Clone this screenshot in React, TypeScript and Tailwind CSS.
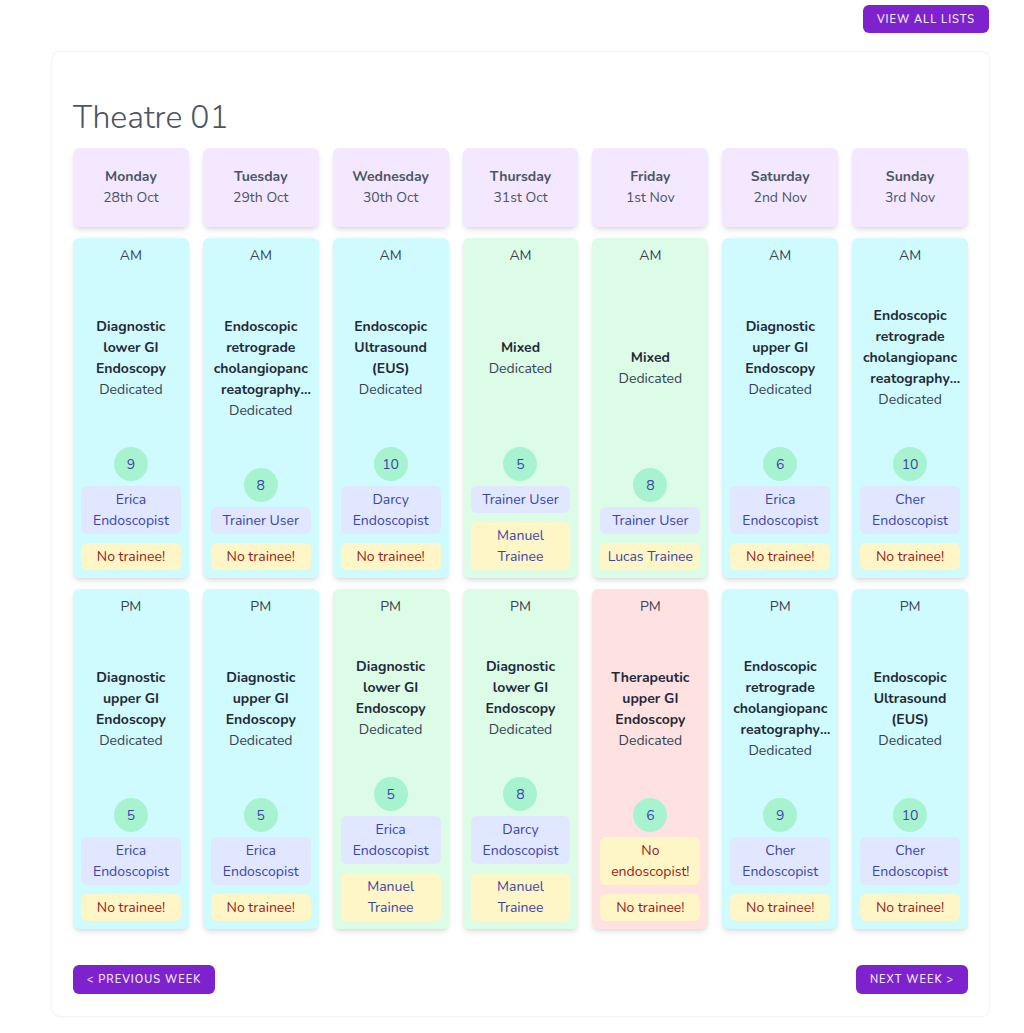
const days = [
  { name: "Monday", date: "28th Oct" },
  { name: "Tuesday", date: "29th Oct" },
  { name: "Wednesday", date: "30th Oct" },
  { name: "Thursday", date: "31st Oct" },
  { name: "Friday", date: "1st Nov" },
  { name: "Saturday", date: "2nd Nov" },
  { name: "Sunday", date: "3rd Nov" },
];

type Slot = {
  tone: "cyan" | "green" | "red";
  title: string;
  count: number;
  endoscopist: string | null;
  trainee: string | null;
};

const ERCP = "Endoscopic retrograde cholangiopancreatography (ERCP)";
const EUS = "Endoscopic Ultrasound (EUS)";
const DLGI = "Diagnostic lower GI Endoscopy";
const DUGI = "Diagnostic upper GI Endoscopy";

const am: Slot[] = [
  { tone: "cyan", title: DLGI, count: 9, endoscopist: "Erica Endoscopist", trainee: null },
  { tone: "cyan", title: ERCP, count: 8, endoscopist: "Trainer User", trainee: null },
  { tone: "cyan", title: EUS, count: 10, endoscopist: "Darcy Endoscopist", trainee: null },
  { tone: "green", title: "Mixed", count: 5, endoscopist: "Trainer User", trainee: "Manuel Trainee" },
  { tone: "green", title: "Mixed", count: 8, endoscopist: "Trainer User", trainee: "Lucas Trainee" },
  { tone: "cyan", title: DUGI, count: 6, endoscopist: "Erica Endoscopist", trainee: null },
  { tone: "cyan", title: ERCP, count: 10, endoscopist: "Cher Endoscopist", trainee: null },
];

const pm: Slot[] = [
  { tone: "cyan", title: DUGI, count: 5, endoscopist: "Erica Endoscopist", trainee: null },
  { tone: "cyan", title: DUGI, count: 5, endoscopist: "Erica Endoscopist", trainee: null },
  { tone: "green", title: DLGI, count: 5, endoscopist: "Erica Endoscopist", trainee: "Manuel Trainee" },
  { tone: "green", title: DLGI, count: 8, endoscopist: "Darcy Endoscopist", trainee: "Manuel Trainee" },
  { tone: "red", title: "Therapeutic upper GI Endoscopy", count: 6, endoscopist: null, trainee: null },
  { tone: "cyan", title: ERCP, count: 9, endoscopist: "Cher Endoscopist", trainee: null },
  { tone: "cyan", title: EUS, count: 10, endoscopist: "Cher Endoscopist", trainee: null },
];

const toneBg = {
  cyan: "bg-[#cffafe]",
  green: "bg-[#dcfce7]",
  red: "bg-[#fee2e2]",
};

function SlotCard({ slot, label }: { slot: Slot; label: string }) {
  return (
    <div className={`${toneBg[slot.tone]} h-[340px] rounded-md shadow-md flex flex-col items-center px-2 pt-[7px] pb-2 text-sm leading-[21px] text-center`}>
      <div className="text-[#374151]">{label}</div>
      <div className="flex-1 flex flex-col items-center justify-center w-full pt-0.5">
        <div className="font-bold text-[#1f2937] line-clamp-4 [overflow-wrap:anywhere] px-px">{slot.title}</div>
        <div className="text-[#374151]">Dedicated</div>
      </div>
      <div className="w-[34px] h-[34px] rounded-full bg-[#a7f3d0] text-[#3b45a8] flex items-center justify-center">
        {slot.count}
      </div>
      {slot.endoscopist ? (
        <div className="mt-[5px] w-full rounded-md bg-[#e0e7ff] text-[#3b45a8] py-[3px] px-1">{slot.endoscopist}</div>
      ) : (
        <div className="mt-[5px] w-full rounded-md bg-[#fef6c6] text-[#991b1b] py-[3px] px-1">No endoscopist!</div>
      )}
      {slot.trainee ? (
        <div className="mt-[9px] w-full rounded-md bg-[#fef6c6] text-[#3b45a8] py-[3px] px-1">{slot.trainee}</div>
      ) : (
        <div className="mt-[9px] w-full rounded-md bg-[#fef6c6] text-[#991b1b] py-[3px] px-1">No trainee!</div>
      )}
    </div>
  );
}

export default function App() {
  return (
    <div className="min-h-screen bg-white font-['Nunito','Lato','Open_Sans',sans-serif]">
      <div className="ml-[52px] w-[937px] pt-[5px] pb-4">
        <div className="flex justify-end">
          <button className="h-[28px] w-[126px] rounded-md bg-[#7e22ce] text-[#efe6f8] text-[11px] leading-[30px] font-semibold tracking-[0.09em] uppercase">
            View all lists
          </button>
        </div>
        <div className="mt-[19px] rounded-lg bg-white shadow-[0_0_3px_rgba(0,0,0,0.12)] px-[21px] pt-12 pb-[22px]">
          <h1 className="text-[32px] leading-9 font-light text-[#4b5563]">Theatre 01</h1>
          <div className="mt-3 grid grid-cols-7 gap-x-[14px] gap-y-[11px]">
            {days.map((d) => (
              <div key={d.name} className="h-[79px] rounded-md bg-[#f3e8ff] shadow-md flex flex-col items-center justify-center pb-0.5 text-sm leading-[21px] text-[#4b5563]">
                <div className="font-bold">{d.name}</div>
                <div>{d.date}</div>
              </div>
            ))}
            {am.map((s, i) => (
              <SlotCard key={"am" + i} slot={s} label="AM" />
            ))}
            {pm.map((s, i) => (
              <SlotCard key={"pm" + i} slot={s} label="PM" />
            ))}
          </div>
          <div className="mt-9 flex justify-between">
            <button className="h-[29px] w-[142px] rounded-md bg-[#7e22ce] text-[#efe6f8] text-[11px] leading-[29px] font-semibold tracking-[0.09em] uppercase">
              &lt; Previous week
            </button>
            <button className="h-[29px] w-[112px] rounded-md bg-[#7e22ce] text-[#efe6f8] text-[11px] leading-[29px] font-semibold tracking-[0.09em] uppercase">
              Next week &gt;
            </button>
          </div>
        </div>
      </div>
    </div>
  );
}
